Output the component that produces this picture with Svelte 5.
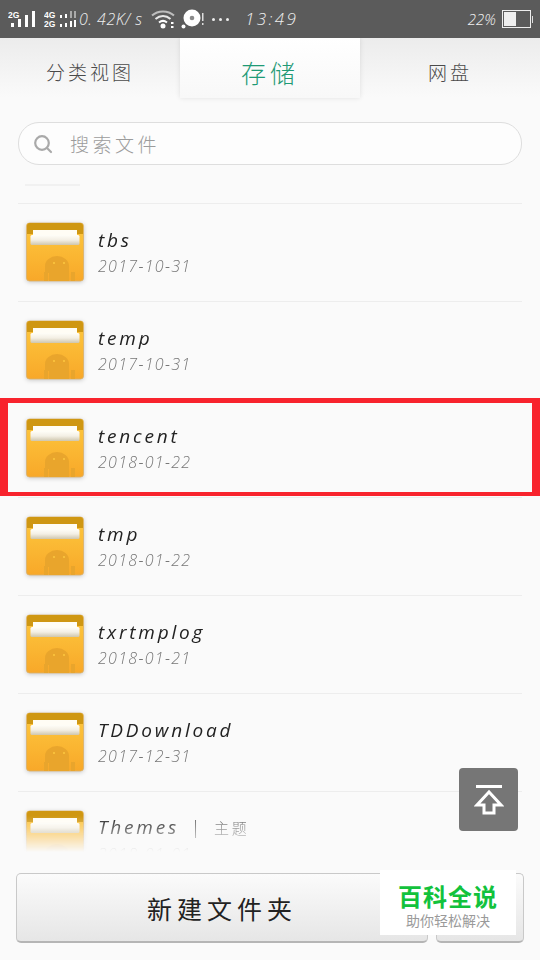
<script>
  const rows = [
    { name: 'tbs', date: '2017-10-31' },
    { name: 'temp', date: '2017-10-31' },
    { name: 'tencent', date: '2018-01-22' },
    { name: 'tmp', date: '2018-01-22' },
    { name: 'txrtmplog', date: '2018-01-21' },
    { name: 'TDDownload', date: '2017-12-31' },
    { name: 'Themes', tag: '主题', date: '2018-01-01' }
  ];
</script>

<div class="screen">
  <header class="status">
    <div class="signal-group">
      <svg class="sig1" width="32" height="20" viewBox="0 0 32 20">
        <text x="0" y="9" class="mini">2G</text>
        <rect x="3" y="14" width="3" height="4" fill="#fff"/>
        <rect x="10" y="10" width="3" height="8" fill="#fff"/>
        <rect x="17" y="6" width="3" height="12" fill="#fff"/>
        <rect x="24" y="2" width="3" height="16" fill="#fff"/>
      </svg>
      <svg class="sig2" width="34" height="20" viewBox="0 0 34 20">
        <text x="0" y="9" class="mini">4G</text>
        <text x="0" y="18" class="mini">2G</text>
        <rect x="16" y="6" width="2" height="3" fill="#fff"/>
        <rect x="21" y="5" width="2" height="4" fill="#fff"/>
        <rect x="26" y="2" width="2" height="7" fill="#aaa"/>
        <rect x="30" y="2" width="2" height="7" fill="#aaa"/>
        <rect x="16" y="15" width="2" height="3" fill="#fff"/>
        <rect x="21" y="14" width="2" height="4" fill="#fff"/>
        <rect x="26" y="12" width="2" height="6" fill="#fff"/>
        <rect x="30" y="11" width="2" height="7" fill="#fff"/>
      </svg>
      <span class="speed">0. 42K/ s</span>
      <svg class="wifi" width="24" height="20" viewBox="0 0 24 20" fill="none">
        <path d="M1 6.5C7 1 17 1 23 6.5" stroke="#bdbdbd" stroke-width="2"/>
        <path d="M4.5 10C9 6 15 6 19.500 10" stroke="#e8e8e8" stroke-width="2"/>
        <path d="M8 13.500C10.500 11.500 13.500 11.500 16 13.500" stroke="#fff" stroke-width="2"/>
        <circle cx="12" cy="17" r="2.500" fill="#fff"/>
        <rect x="20" y="13" width="2.500" height="2" fill="#fff"/>
        <rect x="20" y="17" width="2.500" height="2" fill="#fff"/>
      </svg>
      <svg class="disc" width="24" height="22" viewBox="0 0 24 22">
        <circle cx="11" cy="10" r="8.500" fill="#fff"/>
        <circle cx="11" cy="10" r="2.300" fill="#8a8a8a"/>
        <circle cx="2.500" cy="18.500" r="2" fill="#fff"/>
        <rect x="21" y="5" width="1.500" height="8" fill="#ddd"/>
        <rect x="21" y="15" width="1.500" height="2" fill="#ddd"/>
      </svg>
      <span class="dots"><i></i><i></i><i></i></span>
    </div>
    <span class="clock">13:49</span>
    <div class="battery-group">
      <span class="pct">22%</span>
      <span class="battery"><span class="fill"></span></span>
      <span class="nub"></span>
    </div>
  </header>

  <nav class="tabs">
    <span class="tab">分类视图</span>
    <span class="tab active">存储</span>
    <span class="tab">网盘</span>
  </nav>

  <div class="search">
    <svg width="20" height="20" viewBox="0 0 20 20" fill="none">
      <circle cx="9" cy="9" r="6.800" stroke="#a9a9a9" stroke-width="2.200"/>
      <path d="M14 14l4 4" stroke="#a9a9a9" stroke-width="2.200" stroke-linecap="round"/>
    </svg>
    <span class="placeholder">搜索文件</span>
  </div>

  <div class="list">
    <div class="remnant"><span></span></div>
    {#each rows as row}
      <div class="row">
        <svg class="folder" width="60" height="60" viewBox="0 0 60 60">
          <defs>
            <linearGradient id="fbody" x1="0" y1="0" x2="0" y2="1">
              <stop offset="0" stop-color="#fdc93f"/>
              <stop offset="1" stop-color="#f8a829"/>
            </linearGradient>
            <linearGradient id="fpaper" x1="0" y1="0" x2="0" y2="1">
              <stop offset="0" stop-color="#fffef8"/>
              <stop offset="0.500" stop-color="#f3efe4"/>
              <stop offset="1" stop-color="#cfc6ad"/>
            </linearGradient>
          </defs>
          <rect x="1.500" y="1" width="57" height="58" rx="3" fill="url(#fbody)" stroke="#d9b06a" stroke-width="0.800"/>
          <path d="M2 4a3 3 0 0 1 3-3h50a3 3 0 0 1 3 3v8H2z" fill="#cf9712"/>
          <rect x="8" y="8" width="44" height="6" fill="#fffdf5"/>
          <rect x="5.500" y="13" width="49" height="10" rx="1.500" fill="url(#fpaper)"/>
          <g fill="#e9a52c">
            <path d="M26 54V47a12 10 0 0 1 24 0v7z" transform="translate(-6 -3)"/>
            <rect x="19" y="50" width="4" height="9"/>
            <rect x="46" y="50" width="4" height="9"/>
            <rect x="24" y="46" width="20" height="13"/>
          </g>
          <circle cx="29" cy="41" r="1" fill="#fdc93f"/>
          <circle cx="39" cy="41" r="1" fill="#fdc93f"/>
        </svg>
        <div class="meta">
          <div class="name">{row.name}{#if row.tag}<span class="sep">|</span><span class="tag">{row.tag}</span>{/if}</div>
          <div class="date">{row.date}</div>
        </div>
      </div>
    {/each}
  </div>

  <footer class="actions">
    <button class="btn primary">新建文件夹</button>
    <button class="btn secondary" aria-label="more"></button>
  </footer>

  <div class="highlight"></div>

  <div class="to-top">
    <svg width="30" height="32" viewBox="0 0 30 32" fill="none">
      <path d="M2 2.500h26" stroke="#fff" stroke-width="3"/>
      <path d="M15 8L3 21h7v8h10v-8h7z" stroke="#fff" stroke-width="3"/>
    </svg>
  </div>

  <div class="mark">
    <div class="mark-title">百科全说</div>
    <div class="mark-sub">助你轻松解决</div>
  </div>
</div>

<style>
  :global(body) { margin: 0; background: #fafafa; }
  .screen {
    position: relative;
    width: 540px;
    height: 960px;
    overflow: hidden;
    display: flex;
    flex-direction: column;
    background: #fafafa;
    font-family: "Noto Sans CJK SC", "Noto Sans", sans-serif;
    font-weight: 300;
  }
  .status {
    height: 38px;
    flex: none;
    background: #5b5b5b;
    color: #eee;
    display: flex;
    align-items: center;
    position: relative;
    padding: 0 7px 0 8px;
    justify-content: space-between;
  }
  .signal-group { display: flex; align-items: center; }
  .sig2 { margin-left: 4px; }
  .mini { font: 700 8.500px "Liberation Sans", sans-serif; fill: #fff; }
  .speed {
    font: italic 300 16px "Open Sans", sans-serif;
    width: 72px;
    margin-left: 1px;
    white-space: nowrap;
    letter-spacing: 0.500px;
  }
  .wifi { margin-left: 0; }
  .disc { margin-left: 6px; }
  .dots { display: flex; gap: 4px; margin-left: 7px; }
  .dots i { width: 3px; height: 3px; border-radius: 50%; background: #eee; }
  .clock {
    position: absolute;
    left: 245px;
    top: 7px;
    font: italic 300 17px/24px "Open Sans", sans-serif;
    letter-spacing: 2.400px;
  }
  .battery-group { display: flex; align-items: center; }
  .pct { font: italic 300 15px "Open Sans", sans-serif; margin-right: 6px; color: #f2f2f2; }
  .battery {
    width: 25px;
    height: 14px;
    border: 1.500px solid #eee;
    display: block;
    padding: 1px;
    box-sizing: content-box;
  }
  .fill { display: block; width: 12px; height: 14px; background: #eee; }
  .nub { width: 1px; height: 7px; background: #ddd; margin-left: 1px; }

  .tabs {
    flex: none;
    height: 70px;
    display: grid;
    grid-template-columns: 180px 180px 180px;
    background: linear-gradient(#ececec, #fafafa 85%);
  }
  .tab {
    text-align: center;
    font-size: 19px;
    line-height: 68px;
    letter-spacing: 3px;
    color: #4a4a4a;
  }
  .tab.active {
    height: 60px;
    line-height: 68px;
    background: linear-gradient(#fff, #f8f8f8);
    box-shadow: 0 0 5px rgba(0, 0, 0, 0.1);
    color: #1f9a76;
    font-size: 25px;
    letter-spacing: 4px;
  }

  .search {
    flex: none;
    margin: 14px 18px 0;
    height: 41px;
    border: 1px solid #dedede;
    border-radius: 21px;
    background: #fdfdfd;
    display: flex;
    align-items: center;
    box-sizing: content-box;
    padding-left: 14px;
    width: 488px;
  }
  .placeholder {
    margin-left: 17px;
    font-size: 19px;
    letter-spacing: 3.500px;
    color: #9c9c9c;
  }

  .list {
    flex: 1;
    min-height: 0;
    overflow: hidden;
    -webkit-mask-image: linear-gradient(#000 calc(100% - 46px), transparent calc(100% - 10px));
    mask-image: linear-gradient(#000 calc(100% - 46px), transparent calc(100% - 10px));
  }
  .remnant {
    height: 39px;
    margin: 0 18px;
    border-bottom: 1px solid #ededed;
    box-sizing: border-box;
    padding: 14px 7px 0;
  }
  .remnant span { display: block; width: 55px; height: 2px; margin-top: 5px; background: #f1f1f1; }
  .row {
    height: 98px;
    margin: 0 18px;
    box-sizing: border-box;
    border-bottom: 1px solid #ededed;
    display: flex;
    align-items: center;
    padding: 0 0 2px 7px;
  }
  .folder { flex: none; filter: drop-shadow(0 1px 2px rgba(0, 0, 0, 0.2)); }
  .meta { margin-left: 13px; }
  .name {
    font: italic 400 19px/26px "Open Sans", "Noto Sans CJK SC", sans-serif;
    letter-spacing: 2.800px;
    color: #222;
    white-space: nowrap;
  }
  .sep { margin: 0 11px 0 11px; font-weight: 300; color: #444; }
  .tag {
    font-family: "Noto Sans CJK SC", sans-serif;
    font-style: normal;
    font-weight: 300;
    font-size: 15px;
    color: #666;
  }
  .date {
    font: italic 300 16px/22px "Open Sans", sans-serif;
    letter-spacing: 1.300px;
    color: #777;
    margin-top: 2px;
  }

  .actions {
    flex: none;
    height: 98px;
    display: flex;
    gap: 8px;
    padding: 11px 16px 17px;
    box-sizing: border-box;
  }
  .btn {
    height: 70px;
    padding: 0;
    border: 1px solid #c9c9c9;
    border-bottom: 2px solid #b5b5b5;
    border-radius: 5px;
    background: linear-gradient(#fbfbfb, #e6e6e6);
    font-family: inherit;
    font-weight: 400;
    color: #222;
  }
  .primary { width: 412px; font-size: 25px; letter-spacing: 5px; }
  .secondary { width: 88px; }

  .highlight {
    position: absolute;
    left: 0;
    top: 398px;
    width: 540px;
    height: 98px;
    box-sizing: border-box;
    border: solid #f8232d;
    border-width: 5px 8px 4px 8px;
    pointer-events: none;
  }
  .to-top {
    position: absolute;
    left: 459px;
    top: 768px;
    width: 59px;
    height: 63px;
    border-radius: 4px;
    background: #767676;
    display: flex;
    align-items: center;
    justify-content: center;
  }
  .mark {
    position: absolute;
    left: 380px;
    top: 870px;
    width: 136px;
    height: 65px;
    background: #fff;
    text-align: center;
    font-family: "Noto Sans CJK SC", sans-serif;
  }
  .mark-title {
    margin-top: 12px;
    font-size: 24px;
    line-height: 28px;
    font-weight: 700;
    color: #12c23c;
    letter-spacing: 1px;
  }
  .mark-sub {
    font-size: 14px;
    line-height: 18px;
    font-weight: 400;
    color: #9a9a9a;
    margin-top: 1px;
  }
</style>
